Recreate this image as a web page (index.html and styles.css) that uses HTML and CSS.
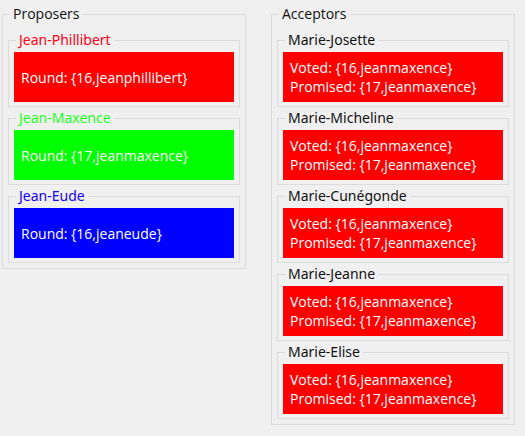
FILE: index.html
```html
<!DOCTYPE html>
<html lang="en">
<head>
<meta charset="utf-8">
<title>Paxos</title>
<link rel="stylesheet" href="styles.css">
</head>
<body>
<main class="board">
  <fieldset class="group">
    <legend>Proposers</legend>
    <div class="list">
      <fieldset class="node red-name"><legend>Jean-Phillibert</legend><div class="state red"><p>Round: {16,jeanphillibert}</p></div></fieldset>
      <fieldset class="node green-name"><legend>Jean-Maxence</legend><div class="state green"><p>Round: {17,jeanmaxence}</p></div></fieldset>
      <fieldset class="node blue-name"><legend>Jean-Eude</legend><div class="state blue"><p>Round: {16,jeaneude}</p></div></fieldset>
    </div>
  </fieldset>
  <fieldset class="group">
    <legend>Acceptors</legend>
    <div class="list">
      <fieldset class="node"><legend>Marie-Josette</legend><div class="state red"><p>Voted: {16,jeanmaxence}</p><p>Promised: {17,jeanmaxence}</p></div></fieldset>
      <fieldset class="node"><legend>Marie-Micheline</legend><div class="state red"><p>Voted: {16,jeanmaxence}</p><p>Promised: {17,jeanmaxence}</p></div></fieldset>
      <fieldset class="node"><legend>Marie-Cunégonde</legend><div class="state red"><p>Voted: {16,jeanmaxence}</p><p>Promised: {17,jeanmaxence}</p></div></fieldset>
      <fieldset class="node"><legend>Marie-Jeanne</legend><div class="state red"><p>Voted: {16,jeanmaxence}</p><p>Promised: {17,jeanmaxence}</p></div></fieldset>
      <fieldset class="node"><legend>Marie-Elise</legend><div class="state red"><p>Voted: {16,jeanmaxence}</p><p>Promised: {17,jeanmaxence}</p></div></fieldset>
    </div>
  </fieldset>
</main>
</body>
</html>
```

FILE: styles.css
```css
* {
  box-sizing: border-box;
}

body {
  margin: 0;
  background: #f0f0f0;
  color: #111;
  font-family: "Segoe UI", "Open Sans", "Noto Sans", sans-serif;
  font-size: 14px;
  line-height: 19px;
}

.board {
  display: grid;
  grid-template-columns: 1fr 1fr;
  align-items: start;
  gap: 25px;
  padding: 4px 10px 4px 2px;
}

fieldset {
  min-width: 0;
  margin: 0;
  border: 1px solid #dcdcdc;
}

legend {
  margin-left: 2px;
  padding: 0 3px;
  line-height: 20px;
}

.group {
  padding: 6px 5px 5px;
}

.list {
  display: flex;
  flex-direction: column;
  gap: 1px;
}

.node {
  padding: 2px 5px 4px;
}

.node legend {
  font-family: "Segoe UI", "Noto Sans", sans-serif;
}

.state {
  display: flex;
  flex-direction: column;
  justify-content: center;
  min-height: 50px;
  padding: 0 7px;
  color: #fff;
}

.state p {
  margin: 0;
}

.red { background: #f00; }
.green { background: #0f0; }
.blue { background: #00f; }

.red-name { color: #ff0016; }
.green-name { color: #1eff1e; }
.blue-name { color: #1400f0; }
```
